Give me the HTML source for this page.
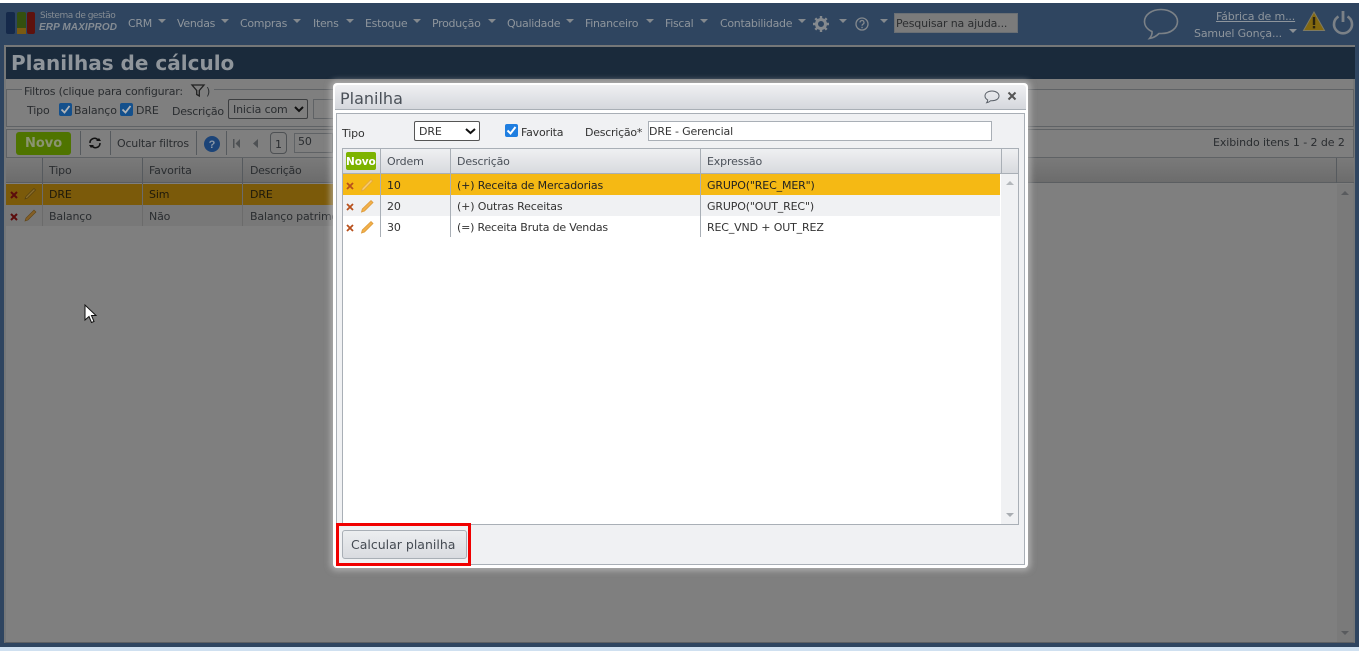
<!DOCTYPE html>
<html lang="pt"><head><meta charset="utf-8"><title>Planilhas de cálculo</title>
<style>
html,body{margin:0;padding:0;width:1359px;height:651px;overflow:hidden;background:#2f4560}
body{position:relative;font-family:"DejaVu Sans","Liberation Sans",sans-serif;font-size:11px;color:#222}
.a,.t{position:absolute}
.t{white-space:nowrap;line-height:14px;letter-spacing:-.15px}
.n{color:#8e959c;font-size:11px;top:17px;letter-spacing:-.3px}
.c{position:absolute;width:0;height:0;border-left:4px solid transparent;border-right:4px solid transparent;border-top:4px solid #84898e}
.d{color:#2a2d30}
.m{color:#333}
.cb{position:absolute;width:13px;height:13px;border-radius:2px;background:#14508c}
.v{position:absolute;width:1px;background:#a9afb6}
.vd{position:absolute;width:1px;background:#565a5e}
svg{position:absolute;overflow:visible}
</style></head><body>
<div class="a" style="left:0;top:0;width:1359px;height:3px;background:#fff"></div>
<div class="a" style="left:0;top:3px;width:1359px;height:42px;background:#2f4560"></div>

<!-- logo -->
<div class="a" style="left:6px;top:12px;width:9px;height:22px;background:#15294a;border-radius:2px"></div>
<div class="a" style="left:17px;top:12px;width:9px;height:16px;background:#34500f;border-radius:2px 2px 0 0"></div>
<div class="a" style="left:17px;top:28px;width:9px;height:6px;background:#7a5a12"></div>
<div class="a" style="left:27px;top:12px;width:8px;height:22px;background:#5e120e;border-radius:2px"></div>
<div class="t" style="left:40px;top:9px;font-size:9px;color:#858c93;letter-spacing:-.5px">Sistema de gestão</div>
<div class="t" style="left:39px;top:21px;font-size:10px;color:#858c93;font-style:italic;font-family:'Liberation Sans',sans-serif;font-weight:bold;letter-spacing:.1px">ERP MAXIPROD</div>

<!-- menu -->
<div class="t n" style="left:128px">CRM</div><div class="c" style="left:158px;top:19px"></div>
<div class="t n" style="left:177px">Vendas</div><div class="c" style="left:221px;top:19px"></div>
<div class="t n" style="left:240px">Compras</div><div class="c" style="left:293px;top:19px"></div>
<div class="t n" style="left:313px">Itens</div><div class="c" style="left:346px;top:19px"></div>
<div class="t n" style="left:365px">Estoque</div><div class="c" style="left:413px;top:19px"></div>
<div class="t n" style="left:432px">Produção</div><div class="c" style="left:488px;top:19px"></div>
<div class="t n" style="left:507px">Qualidade</div><div class="c" style="left:566px;top:19px"></div>
<div class="t n" style="left:585px">Financeiro</div><div class="c" style="left:646px;top:19px"></div>
<div class="t n" style="left:665px">Fiscal</div><div class="c" style="left:700px;top:19px"></div>
<div class="t n" style="left:720px">Contabilidade</div><div class="c" style="left:798px;top:19px"></div>
<svg style="left:813px;top:16px" width="16" height="16" viewBox="0 0 16 16"><circle cx="8" cy="8" r="4.5" fill="none" stroke="#84898e" stroke-width="3"/><path d="M8 0v3M8 13v3M0 8h3M13 8h3M2.3 2.3l2 2M11.7 11.7l2 2M13.7 2.3l-2 2M4.3 11.7l-2 2" stroke="#84898e" stroke-width="2.4"/></svg>
<div class="c" style="left:839px;top:19px"></div>
<svg style="left:855px;top:17px" width="14" height="14" viewBox="0 0 14 14"><circle cx="7" cy="7" r="6" fill="none" stroke="#84898e" stroke-width="1.3"/><path d="M5 5.5a2 2 0 1 1 3 1.7c-.7.4-1 .8-1 1.6" fill="none" stroke="#84898e" stroke-width="1.2"/><rect x="6.4" y="9.8" width="1.3" height="1.4" fill="#84898e"/></svg>
<div class="c" style="left:880px;top:19px"></div>
<div class="a" style="left:894px;top:13px;width:124px;height:20px;background:#7b7b7b;border:1px solid #6a6f74;box-sizing:border-box"></div>
<div class="t" style="left:896px;top:17px;color:#2c2e30;font-size:11px">Pesquisar na ajuda...</div>

<svg style="left:1143px;top:8px" width="36" height="33" viewBox="0 0 36 33"><path d="M18 1.5C8.500 1.500 1.500 7 1.500 13.500c0 4.300 3 8 7.500 10 .3 2-.8 5-2.500 7 3.500-.5 7-2.500 9.500-5h2.500c9.500 0 16-5.500 16-12S27.500 1.500 18 1.500z" fill="none" stroke="#7b8187" stroke-width="1.600"/></svg>
<div class="t" style="left:1216px;top:10px;color:#8e959c;text-decoration:underline;font-size:11px">Fábrica de m...</div>
<div class="t" style="left:1194px;top:27px;color:#8e959c;font-size:11px">Samuel Gonça...</div>
<div class="c" style="left:1289px;top:29px;border-top-color:#8a8f94"></div>
<svg style="left:1303px;top:11px" width="22" height="20" viewBox="0 0 22 20"><path d="M11 1L21.500 19.500H.5z" fill="#84690f" stroke="#7e7a62" stroke-width="1"/><rect x="9.800" y="6" width="2.400" height="8" fill="#2a2410"/><rect x="9.800" y="15" width="2.400" height="2.400" fill="#2a2410"/></svg>
<svg style="left:1332px;top:10px" width="22" height="24" viewBox="0 0 22 24"><path d="M6.500 6.500a9 9 0 1 0 9 0" fill="none" stroke="#7b8187" stroke-width="2.600"/><path d="M11 1v11" stroke="#7b8187" stroke-width="2.800"/></svg>

<!-- main panel -->
<div class="a" style="left:4px;top:45px;width:1351px;height:598px;background:#7f7f7f;border:2px solid #757778;border-bottom:1px solid #5e6063;box-sizing:border-box"></div>
<div class="a" style="left:6px;top:47px;width:1349px;height:32px;background:#1a2a3b"></div>
<div class="t" style="left:11px;top:50px;font-size:20px;line-height:26px;font-weight:bold;color:#8f959b;font-family:'DejaVu Sans',sans-serif;letter-spacing:0">Planilhas de cálculo</div>
<div class="a" style="left:0;top:644px;width:1359px;height:3px;background:#2f4560"></div>
<div class="a" style="left:0;top:647px;width:1359px;height:4px;background:#cfe0f0"></div>
<div class="a" style="left:1355px;top:45px;width:4px;height:602px;background:#2f4560"></div>
<div class="a" style="left:0;top:45px;width:4px;height:602px;background:#2f4560"></div>

<!-- filters -->
<div class="a" style="left:6px;top:89px;width:1348px;height:38px;border:1px solid #5f6265;box-sizing:border-box"></div>
<div class="a" style="left:22px;top:84px;width:192px;height:10px;background:#7f7f7f"></div>
<div class="t d" style="left:24px;top:85px;letter-spacing:-.2px">Filtros (clique para configurar:</div>
<svg style="left:191px;top:84px" width="14" height="13" viewBox="0 0 14 13"><path d="M1 1h12L8.300 6.500V12L5.700 10.500v-4z" fill="none" stroke="#222" stroke-width="1.300"/></svg>
<div class="t d" style="left:206px;top:85px">)</div>
<div class="t d" style="left:27px;top:104px">Tipo</div>
<div class="cb" style="left:59px;top:103px"></div>
<svg style="left:59px;top:103px" width="13" height="13" viewBox="0 0 13 13"><path d="M2.500 6.500l3 3 5-6.500" fill="none" stroke="#b0b4b8" stroke-width="1.800"/></svg>
<div class="t d" style="left:74px;top:104px">Balanço</div>
<div class="cb" style="left:120px;top:103px"></div>
<svg style="left:120px;top:103px" width="13" height="13" viewBox="0 0 13 13"><path d="M2.500 6.500l3 3 5-6.500" fill="none" stroke="#b0b4b8" stroke-width="1.800"/></svg>
<div class="t d" style="left:136px;top:104px">DRE</div>
<div class="t d" style="left:172px;top:105px;letter-spacing:-.25px">Descrição</div>
<div class="a" style="left:228px;top:99px;width:80px;height:20px;border:1px solid #3c3e40;border-radius:2px;box-sizing:border-box"></div>
<div class="t d" style="left:233px;top:103px">Inicia com</div>
<svg style="left:294px;top:106px" width="10" height="7" viewBox="0 0 10 7"><path d="M1 1l4 4 4-4" fill="none" stroke="#111" stroke-width="2"/></svg>
<div class="a" style="left:313px;top:99px;width:25px;height:20px;border:1px solid #5f6265;box-sizing:border-box"></div>

<!-- toolbar -->
<div class="a" style="left:6px;top:129px;width:1348px;height:29px;border:1px solid #5f6265;box-sizing:border-box"></div>
<div class="a" style="left:16px;top:132px;width:55px;height:23px;background:#4f7400;border-radius:3px"></div>
<div class="t" style="left:25px;top:137px;font-weight:bold;font-size:13px;color:#8a9471;letter-spacing:0">Novo</div>
<div class="vd" style="left:80px;top:131px;height:24px"></div>
<svg style="left:88px;top:137px" width="14" height="12" viewBox="0 0 14 12"><path d="M2 6a4.500 4.500 0 0 1 8-3M12 6a4.500 4.500 0 0 1-8 3" fill="none" stroke="#111" stroke-width="1.500"/><path d="M8 4h5l-2-3zM6 8H1l2 3z" fill="#111"/></svg>
<div class="vd" style="left:110px;top:131px;height:24px"></div>
<div class="t d" style="left:117px;top:137px;letter-spacing:-.2px">Ocultar filtros</div>
<div class="vd" style="left:196px;top:131px;height:24px"></div>
<svg style="left:204px;top:136px" width="16" height="16" viewBox="0 0 16 16"><circle cx="8" cy="8" r="8" fill="#1c4478"/><text x="8" y="12" text-anchor="middle" font-size="11" font-weight="bold" fill="#8a98a8" font-family="Liberation Sans">?</text></svg>
<div class="vd" style="left:226px;top:131px;height:24px"></div>
<svg style="left:233px;top:139px" width="28" height="9" viewBox="0 0 28 9"><path d="M0 0h1.500v9H0zM7 0v9L2.500 4.500zM25 0v9l-5-4.500z" fill="#4e5154"/></svg>
<div class="a" style="left:270px;top:132px;width:17px;height:22px;border:1px solid #4e5154;border-radius:4px;box-sizing:border-box"></div>
<div class="t d" style="left:275px;top:138px">1</div>
<div class="a" style="left:294px;top:133px;width:39px;height:20px;border:1px solid #5f6265;box-sizing:border-box"></div>
<div class="t d" style="left:298px;top:135px">50</div>
<div class="t d" style="left:1213px;top:136px;letter-spacing:-.08px">Exibindo itens 1 - 2 de 2</div>

<!-- table -->
<div class="a" style="left:6px;top:158px;width:1348px;height:25px;background:linear-gradient(#7a7a7a,#6c6c6c);border-bottom:1px solid #5b5e61;box-sizing:border-box"></div>
<div class="vd" style="left:42px;top:158px;height:68px"></div>
<div class="vd" style="left:142px;top:158px;height:68px"></div>
<div class="vd" style="left:242px;top:158px;height:68px"></div>
<div class="vd" style="left:1336px;top:158px;height:25px"></div>
<div class="t d" style="left:49px;top:164px">Tipo</div>
<div class="t d" style="left:149px;top:164px">Favorita</div>
<div class="t d" style="left:250px;top:164px;letter-spacing:-.3px">Descrição</div>
<div class="a" style="left:6px;top:184px;width:330px;height:21px;background:#7b5a0a"></div>
<div class="a" style="left:6px;top:205px;width:330px;height:21px;background:#787878"></div>
<div class="vd" style="left:42px;top:184px;height:42px;background:#6b6b6b"></div>
<div class="vd" style="left:142px;top:184px;height:42px;background:#6b6b6b"></div>
<div class="vd" style="left:242px;top:184px;height:42px;background:#6b6b6b"></div>
<div class="t d" style="left:49px;top:188px;color:#1f1a0a">DRE</div>
<div class="t d" style="left:149px;top:188px;color:#1f1a0a">Sim</div>
<div class="t d" style="left:250px;top:188px;color:#1f1a0a">DRE</div>
<div class="t d" style="left:49px;top:210px">Balanço</div>
<div class="t d" style="left:149px;top:210px">Não</div>
<div class="t d" style="left:250px;top:210px">Balanço patrimonial</div>
<svg style="left:10px;top:191px" width="8" height="8" viewBox="0 0 8 8"><path d="M1 1l6 6M7 1L1 7" stroke="#5c0c0c" stroke-width="2"/></svg>
<svg style="left:10px;top:213px" width="8" height="8" viewBox="0 0 8 8"><path d="M1 1l6 6M7 1L1 7" stroke="#5c0c0c" stroke-width="2"/></svg>
<svg style="left:24px;top:187px" width="13" height="13" viewBox="0 0 13 13"><path d="M1 12l1-2.500L10 1.500l1.500 1.500L3.500 11z" fill="#8a6d2a" stroke="#4c3a12" stroke-width=".6"/></svg>
<svg style="left:24px;top:209px" width="13" height="13" viewBox="0 0 13 13"><path d="M1 12l1-3L10 1l2 2-8 8z" fill="#845f26" stroke="#5f4519" stroke-width=".6"/></svg>
<div class="a" style="left:1337px;top:184px;width:16px;height:458px;background:#7a7a7a"></div>
<div class="c" style="left:1341px;top:191px;border-top:0;border-bottom:4px solid #595b5e"></div>
<div class="c" style="left:1341px;top:631px;border-top-color:#595b5e"></div>

<!-- cursor -->
<svg style="left:84px;top:304px" width="13" height="20" viewBox="0 0 13 20"><path d="M1 1v15l4-3.500 2.500 6 2.500-1-2.500-6H12z" fill="#fff" stroke="#111" stroke-width="1"/></svg>

<!-- dialog -->
<div class="a" style="left:333px;top:83px;width:695px;height:485px;background:#fff;border-radius:4px;box-shadow:0 0 6px 3px rgba(205,205,205,.55)"></div>
<div class="a" style="left:335px;top:85px;width:691px;height:25px;background:linear-gradient(#eff0f2,#d5d8dd);border-bottom:1px solid #a9afb6;box-sizing:border-box;border-radius:3px 3px 0 0"></div>
<div class="t" style="left:340px;top:89px;font-size:16px;line-height:20px;color:#4a5058;letter-spacing:0">Planilha</div>
<svg style="left:984px;top:90px" width="16" height="14" viewBox="0 0 16 14"><path d="M8 1C4 1 1 3 1 6c0 1.700 1 3 2.700 3.900 0 1-.4 2-1 2.800 1.500-.2 3-1 4-2h1.300c4 0 7-1.900 7-4.700S12 1 8 1z" fill="none" stroke="#5a6068" stroke-width="1"/></svg>
<svg style="left:1007px;top:91px" width="10" height="10" viewBox="0 0 10 10"><path d="M1.500 1.500l7 7M8.500 1.500l-7 7" stroke="#555" stroke-width="2"/></svg>

<div class="a" style="left:336px;top:113px;width:689px;height:452px;background:#f0f1f3;border:1px solid #a9afb6;box-sizing:border-box"></div>
<div class="t m" style="left:342px;top:127px">Tipo</div>
<div class="a" style="left:414px;top:121px;width:66px;height:20px;background:#fff;border:1px solid #555;border-radius:2px;box-sizing:border-box"></div>
<div class="t m" style="left:419px;top:125px">DRE</div>
<svg style="left:465px;top:128px" width="11" height="7" viewBox="0 0 11 7"><path d="M1 1l4.500 4L10 1" fill="none" stroke="#111" stroke-width="2"/></svg>
<div class="a" style="left:505px;top:124px;width:13px;height:13px;background:#1f7ee0;border-radius:2px"></div>
<svg style="left:505px;top:124px" width="13" height="13" viewBox="0 0 13 13"><path d="M2.500 6.500l3 3 5-6.500" fill="none" stroke="#fff" stroke-width="2"/></svg>
<div class="t m" style="left:521px;top:126px;letter-spacing:-.2px">Favorita</div>
<div class="t m" style="left:585px;top:126px;letter-spacing:-.25px">Descrição*</div>
<div class="a" style="left:648px;top:121px;width:344px;height:20px;background:#fff;border:1px solid #a9afb6;box-sizing:border-box"></div>
<div class="t m" style="left:649px;top:125px">DRE - Gerencial</div>

<!-- grid -->
<div class="a" style="left:342px;top:148px;width:677px;height:377px;background:#fff;border:1px solid #a9afb6;box-sizing:border-box"></div>
<div class="a" style="left:343px;top:149px;width:675px;height:25px;background:linear-gradient(#eff0f2,#d8dade);border-bottom:1px solid #a9afb6;box-sizing:border-box"></div>
<div class="a" style="left:1001px;top:174px;width:17px;height:350px;background:#f0f1f3"></div>
<div class="a" style="left:343px;top:174px;width:657px;height:21px;background:#f5b914"></div>
<div class="a" style="left:343px;top:195px;width:657px;height:21px;background:#f0f1f3"></div>
<div class="v" style="left:380px;top:149px;height:88px"></div>
<div class="v" style="left:450px;top:149px;height:88px"></div>
<div class="v" style="left:700px;top:149px;height:88px"></div>
<div class="v" style="left:1001px;top:149px;height:25px"></div>
<div class="a" style="left:346px;top:152px;width:30px;height:18px;background:#7db300;border-radius:2px"></div>
<div class="t" style="left:346px;top:155px;font-size:10.500px;font-weight:bold;color:#fff;letter-spacing:-.1px">Novo</div>
<div class="t" style="left:387px;top:155px;color:#4a5058">Ordem</div>
<div class="t" style="left:457px;top:155px;color:#4a5058">Descrição</div>
<div class="t" style="left:707px;top:155px;color:#4a5058">Expressão</div>

<div class="t m" style="left:387px;top:179px;color:#222">10</div>
<div class="t m" style="left:457px;top:179px;color:#222">(+) Receita de Mercadorias</div>
<div class="t m" style="left:707px;top:179px;color:#222">GRUPO("REC_MER")</div>
<div class="t m" style="left:387px;top:200px">20</div>
<div class="t m" style="left:457px;top:200px">(+) Outras Receitas</div>
<div class="t m" style="left:707px;top:200px">GRUPO("OUT_REC")</div>
<div class="t m" style="left:387px;top:221px">30</div>
<div class="t m" style="left:457px;top:221px;letter-spacing:-.2px">(=) Receita Bruta de Vendas</div>
<div class="t m" style="left:707px;top:221px">REC_VND + OUT_REZ</div>

<svg style="left:346px;top:182px" width="8" height="8" viewBox="0 0 8 8"><path d="M1 1l6 6M7 1L1 7" stroke="#b8501c" stroke-width="1.800"/></svg>
<svg style="left:346px;top:203px" width="8" height="8" viewBox="0 0 8 8"><path d="M1 1l6 6M7 1L1 7" stroke="#b8501c" stroke-width="1.800"/></svg>
<svg style="left:346px;top:224px" width="8" height="8" viewBox="0 0 8 8"><path d="M1 1l6 6M7 1L1 7" stroke="#b8501c" stroke-width="1.800"/></svg>
<svg style="left:360px;top:178px" width="14" height="14" viewBox="0 0 14 14"><path d="M1.500 13l.8-2.800L11 1.500l1.500 1.500L3.800 12z" fill="#f8cc70" stroke="#e2a83f" stroke-width=".8"/></svg>
<svg style="left:360px;top:199px" width="14" height="14" viewBox="0 0 14 14"><path d="M1.500 13l.8-3L11 1.500 13 3.500 4.500 12z" fill="#f2b04a" stroke="#dc9a3a" stroke-width=".8"/></svg>
<svg style="left:360px;top:220px" width="14" height="14" viewBox="0 0 14 14"><path d="M1.500 13l.8-3L11 1.500 13 3.500 4.500 12z" fill="#f2b04a" stroke="#dc9a3a" stroke-width=".8"/></svg>
<div class="c" style="left:1006px;top:181px;border-top:0;border-bottom:4px solid #b4b8bc"></div>
<div class="c" style="left:1006px;top:513px;border-top-color:#a9adb2"></div>

<!-- calc button -->
<div class="a" style="left:342px;top:530px;width:125px;height:29px;background:linear-gradient(#eceef0,#d9dbe0);border:1px solid #a9afb6;border-radius:3px;box-sizing:border-box"></div>
<div class="t" style="left:351px;top:538px;font-size:12.500px;color:#444a52;letter-spacing:0">Calcular planilha</div>
<div class="a" style="left:336px;top:523px;width:135px;height:43px;border:3px solid #f00000;box-sizing:border-box"></div>
</body></html>
